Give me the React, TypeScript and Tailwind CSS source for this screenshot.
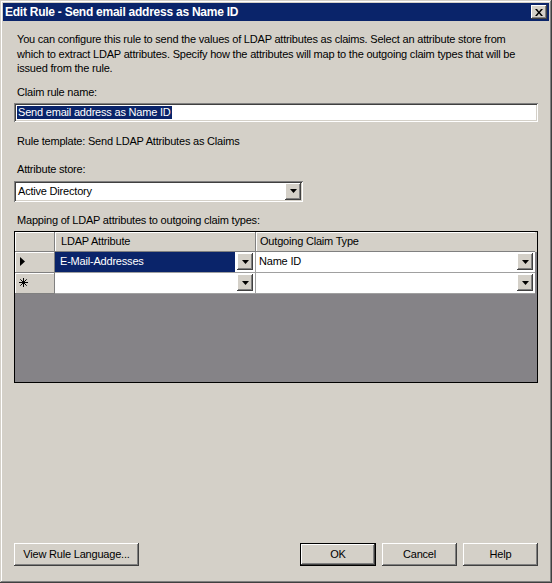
import React from 'react';

const raised =
  'shadow-[inset_-1px_-1px_0_#404040,inset_1px_1px_0_#ffffff,inset_-2px_-2px_0_#808080,inset_2px_2px_0_#d4d0c8]';
const sunken =
  'shadow-[inset_1px_1px_0_#808080,inset_-1px_-1px_0_#ffffff,inset_2px_2px_0_#404040,inset_-2px_-2px_0_#d4d0c8]';

function DropArrow() {
  return (
    <div className={`w-[16px] h-[17px] bg-[#d4d0c8] flex items-center justify-center ${raised}`}>
      <svg width="7" height="4" viewBox="0 0 7 4">
        <path d="M0 0h7L3.5 4z" fill="#000" />
      </svg>
    </div>
  );
}

function WinButton({ label, width, isDefault }: { label: string; width: string; isDefault?: boolean }) {
  return (
    <button
      className={`${width} h-[23px] bg-[#d4d0c8] text-black ${
        isDefault ? 'border border-black' : ''
      }`}
    >
      <div className={`w-full h-full flex items-center justify-center ${raised}`}>{label}</div>
    </button>
  );
}

export default function App() {
  return (
    <div
      className="w-[552px] h-[583px] bg-[#d4d0c8] p-[3px] flex flex-col text-[11px] tracking-[-0.2px] text-black shadow-[inset_-1px_-1px_0_#404040,inset_1px_1px_0_#d4d0c8,inset_-2px_-2px_0_#808080,inset_2px_2px_0_#ffffff]"
      style={{ fontFamily: '"Liberation Sans", Arial, sans-serif' }}
    >
      {/* Title bar */}
      <div className="h-[18px] bg-[#0a246a] flex items-center justify-between pl-[2px] pr-[2px]">
        <span className="text-white font-bold text-[12px] tracking-[-0.25px]">
          Edit Rule - Send email address as Name ID
        </span>
        <div className={`w-[16px] h-[14px] bg-[#d4d0c8] flex items-center justify-center ${raised}`}>
          <svg width="8" height="7" viewBox="0 0 8 7">
            <path d="M0 0h2l2 2.5L6 0h2L5 3.5 8 7H6L4 4.5 2 7H0l3-3.5z" fill="#000" />
          </svg>
        </div>
      </div>

      {/* Body */}
      <div className="flex-1 flex flex-col px-[11px] pt-[11px] pb-[14px]">
        <p className="pl-[3px] leading-[14.5px] whitespace-nowrap">
          You can configure this rule to send the values of LDAP attributes as claims. Select an attribute store from
          <br />
          which to extract LDAP attributes. Specify how the attributes will map to the outgoing claim types that will be
          <br />
          issued from the rule.
        </p>

        <div className="pl-[3px] mt-[9px] leading-[14px]">Claim rule name:</div>
        <div className={`mt-[4px] h-[19px] bg-white flex items-center pl-[3px] ${sunken}`}>
          <span className="bg-[#0a246a] text-white leading-[13px] px-[1px]">Send email address as Name ID</span>
        </div>

        <div className="pl-[3px] mt-[12px] leading-[14px]">Rule template: Send LDAP Attributes as Claims</div>

        <div className="pl-[3px] mt-[14px] leading-[14px]">Attribute store:</div>
        <div className={`mt-[5px] w-[289px] h-[21px] bg-white flex items-center justify-between pl-[4px] pr-[2px] ${sunken}`}>
          <span>Active Directory</span>
          <DropArrow />
        </div>

        <div className="pl-[3px] mt-[11px] leading-[14px]">Mapping of LDAP attributes to outgoing claim types:</div>

        {/* Grid */}
        <div className="mt-[4px] h-[152px] border border-black bg-[#858387] flex flex-col">
          <div className="flex h-[20px] bg-[#d4d0c8]">
            <div className="w-[40px] border-r border-b border-[#808080] shadow-[inset_1px_1px_0_#ffffff]" />
            <div className="w-[201px] border-r border-b border-[#808080] shadow-[inset_1px_1px_0_#ffffff] flex items-center pl-[6px]">
              LDAP Attribute
            </div>
            <div className="flex-1 border-b border-[#808080] shadow-[inset_1px_1px_0_#ffffff] flex items-center pl-[4px] mr-[2px]">
              Outgoing Claim Type
            </div>
          </div>

          <div className="flex h-[21px]">
            <div className="w-[40px] bg-[#d4d0c8] border-r border-b border-[#808080] shadow-[inset_1px_1px_0_#ffffff] flex items-center pl-[5px]">
              <svg width="5" height="9" viewBox="0 0 5 9">
                <path d="M0 0l5 4.5L0 9z" fill="#000" />
              </svg>
            </div>
            <div className="w-[201px] bg-white border-r border-b border-[#a0a0a0] flex items-center">
              <div className="flex-1 h-full bg-[#0a246a] text-white flex items-center pl-[5px]">E-Mail-Addresses</div>
              <div className="px-[2px]">
                <DropArrow />
              </div>
            </div>
            <div className="flex-1 bg-white border-b border-[#a0a0a0] flex items-center justify-between pl-[3px] pr-[2px] mr-[2px]">
              <span>Name ID</span>
              <DropArrow />
            </div>
          </div>

          <div className="flex h-[21px]">
            <div className="w-[40px] bg-[#d4d0c8] border-r border-b border-[#808080] shadow-[inset_1px_1px_0_#ffffff] flex items-center pl-[4px]">
              <svg width="9" height="9" viewBox="0 0 9 9">
                <path d="M4.5 0v9M0 4.5h9M1.3 1.3l6.4 6.4M7.7 1.3L1.3 7.7" stroke="#000" strokeWidth="1" />
              </svg>
            </div>
            <div className="w-[201px] bg-white border-r border-b border-[#a0a0a0] flex items-center justify-end pr-[2px]">
              <DropArrow />
            </div>
            <div className="flex-1 bg-white border-b border-[#a0a0a0] flex items-center justify-end pr-[2px] mr-[2px]">
              <DropArrow />
            </div>
          </div>
        </div>

        {/* Buttons */}
        <div className="mt-auto flex items-center">
          <WinButton label="View Rule Language..." width="w-[125px]" />
          <div className="flex-1" />
          <div className="flex gap-[6px]">
            <WinButton label="OK" width="w-[76px]" isDefault />
            <WinButton label="Cancel" width="w-[75px]" />
            <WinButton label="Help" width="w-[75px]" />
          </div>
        </div>
      </div>
    </div>
  );
}
